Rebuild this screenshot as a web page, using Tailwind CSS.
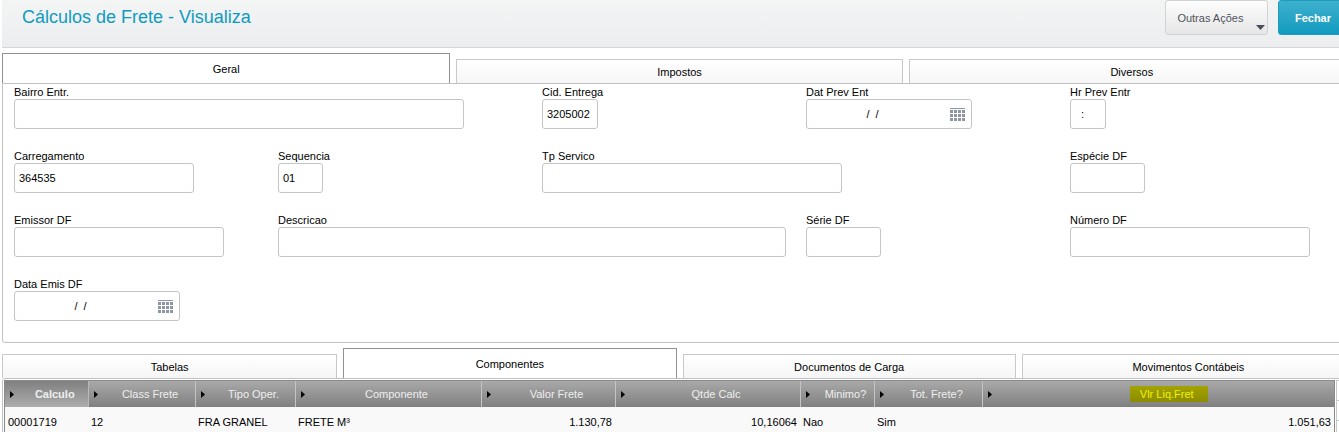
<!DOCTYPE html>
<html lang="pt-BR">
<head>
    <meta charset="UTF-8">
    <meta name="viewport" content="width=device-width, initial-scale=1.0">
    <title>Cálculos de Frete - Visualiza</title>
    <script src="https://cdn.jsdelivr.net/npm/@tailwindcss/browser@4"></script>
</head>
<body class="bg-white text-black text-[11px] leading-[15px] font-['Liberation_Sans',Arial,sans-serif] overflow-hidden">
<div class="pl-0.5 -mr-4">
    <!-- Cabeçalho -->
    <header class="flex justify-between items-start h-12 pl-5 pr-[7px] bg-linear-to-b from-[#f3f5f5] to-[#ecedef] border-b border-[#d5d6d8]">
        <h1 class="pt-1 text-[18px] leading-[26px] text-[#0f9bbf]">Cálculos de Frete - Visualiza</h1>
        <div class="flex gap-2.5">
            <button class="relative w-[103px] h-[35px] pt-0.5 pr-3 rounded-[3px] border border-[#d2d3d5] bg-linear-to-b from-[#fdfdfd] to-[#e6e6e6] text-[#4f535e]">
                Outras Ações
                <svg class="absolute right-0.5 bottom-1" width="9" height="5" viewBox="0 0 9 5" fill="#4a4e5a"><path d="M0 0h9L4.500 5z"/></svg>
            </button>
            <button class="h-[35px] px-4 pt-0.5 rounded-[3px] border border-[#1c9dbd] bg-linear-to-b from-[#3cb0cd] to-[#0e9bc0] text-white font-bold">Fechar</button>
        </div>
    </header>

    <!-- Abas superiores -->
    <nav class="flex items-end gap-1.5 h-[35px] pt-[5px]">
        <button class="grow basis-1 h-[30px] pt-0.5 border border-b-0 border-[#8f9193] bg-white">Geral</button>
        <button class="flex-1 h-6 pt-0.5 border border-b-0 border-[#c8c9ca] bg-linear-to-b from-white to-[#f6f6f6]">Impostos</button>
        <button class="flex-1 h-6 pt-0.5 border border-b-0 border-[#c8c9ca] bg-linear-to-b from-white to-[#f6f6f6]">Diversos</button>
    </nav>

    <!-- Formulário -->
    <form class="grid grid-cols-[repeat(5,264px)] gap-y-[19px] pl-[11px] pb-[21px] border border-[#c0c1c2] rounded-b-[3px]">
        <div class="col-span-2 flex flex-col items-start">
            <label for="bairro" class="pt-0.5 leading-[13px]">Bairro Entr.</label>
            <input id="bairro" type="text" class="w-[450px] h-[30px] px-1 border border-[#c4c5c6] rounded-[3px]">
        </div>
        <div class="flex flex-col items-start">
            <label for="cidade" class="pt-0.5 leading-[13px]">Cid. Entrega</label>
            <input id="cidade" type="text" value="3205002" class="w-14 h-[30px] px-1 border border-[#c4c5c6] rounded-[3px]">
        </div>
        <div class="flex flex-col items-start">
            <label for="dataPrev" class="pt-0.5 leading-[13px]">Dat Prev Ent</label>
            <div class="flex items-center w-[166px] h-[30px] pr-1.5 border border-[#c4c5c6] rounded-[3px]">
                <input id="dataPrev" type="text" value="/  /" class="w-full min-w-0 text-center pr-3">
                <button type="button" aria-label="Calendário" class="shrink-0">
                    <svg width="15" height="13" viewBox="0 0 15 13" fill="#8e95a3"><path d="M0 0h15v1H0zM0 2h3v3H0zM4 2h3v3H4zM8 2h3v3H8zM12 2h3v3h-3zM0 6h3v3H0zM4 6h3v3H4zM8 6h3v3H8zM12 6h3v3h-3zM0 10h3v3H0zM4 10h3v3H4zM8 10h3v3H8zM12 10h3v3h-3z"/></svg>
                </button>
            </div>
        </div>
        <div class="flex flex-col items-start">
            <label for="horaPrev" class="pt-0.5 leading-[13px]">Hr Prev Entr</label>
            <input id="horaPrev" type="text" value=":" class="w-9 h-[30px] pl-2.5 border border-[#c4c5c6] rounded-[3px]">
        </div>

        <div class="flex flex-col items-start">
            <label for="carregamento" class="pt-0.5 leading-[13px]">Carregamento</label>
            <input id="carregamento" type="text" value="364535" class="w-[180px] h-[30px] px-1 border border-[#c4c5c6] rounded-[3px]">
        </div>
        <div class="flex flex-col items-start">
            <label for="sequencia" class="pt-0.5 leading-[13px]">Sequencia</label>
            <input id="sequencia" type="text" value="01" class="w-[45px] h-[30px] px-1 border border-[#c4c5c6] rounded-[3px]">
        </div>
        <div class="col-span-2 flex flex-col items-start">
            <label for="servico" class="pt-0.5 leading-[13px]">Tp Servico</label>
            <input id="servico" type="text" class="w-[300px] h-[30px] px-1 border border-[#c4c5c6] rounded-[3px]">
        </div>
        <div class="flex flex-col items-start">
            <label for="especie" class="pt-0.5 leading-[13px]">Espécie DF</label>
            <input id="especie" type="text" class="w-[75px] h-[30px] px-1 border border-[#c4c5c6] rounded-[3px]">
        </div>

        <div class="flex flex-col items-start">
            <label for="emissor" class="pt-0.5 leading-[13px]">Emissor DF</label>
            <input id="emissor" type="text" class="w-[210px] h-[30px] px-1 border border-[#c4c5c6] rounded-[3px]">
        </div>
        <div class="col-span-2 flex flex-col items-start">
            <label for="descricao" class="pt-0.5 leading-[13px]">Descricao</label>
            <input id="descricao" type="text" class="w-[508px] h-[30px] px-1 border border-[#c4c5c6] rounded-[3px]">
        </div>
        <div class="flex flex-col items-start">
            <label for="serie" class="pt-0.5 leading-[13px]">Série DF</label>
            <input id="serie" type="text" class="w-[75px] h-[30px] px-1 border border-[#c4c5c6] rounded-[3px]">
        </div>
        <div class="flex flex-col items-start">
            <label for="numero" class="pt-0.5 leading-[13px]">Número DF</label>
            <input id="numero" type="text" class="w-[240px] h-[30px] px-1 border border-[#c4c5c6] rounded-[3px]">
        </div>

        <div class="flex flex-col items-start">
            <label for="dataEmis" class="pt-0.5 leading-[13px]">Data Emis DF</label>
            <div class="flex items-center w-[166px] h-[30px] pr-1.5 border border-[#c4c5c6] rounded-[3px]">
                <input id="dataEmis" type="text" value="/  /" class="w-full min-w-0 text-center pr-3">
                <button type="button" aria-label="Calendário" class="shrink-0">
                    <svg width="15" height="13" viewBox="0 0 15 13" fill="#8e95a3"><path d="M0 0h15v1H0zM0 2h3v3H0zM4 2h3v3H4zM8 2h3v3H8zM12 2h3v3h-3zM0 6h3v3H0zM4 6h3v3H4zM8 6h3v3H8zM12 6h3v3h-3zM0 10h3v3H0zM4 10h3v3H4zM8 10h3v3H8zM12 10h3v3h-3z"/></svg>
                </button>
            </div>
        </div>
    </form>

    <!-- Abas inferiores -->
    <nav class="flex items-end gap-1.5 h-[35px] pt-[5px]">
        <button class="grow basis-1 h-6 pt-0.5 border border-b-0 border-[#c8c9ca] bg-linear-to-b from-white to-[#f6f6f6]">Tabelas</button>
        <button class="flex-1 h-[30px] pt-0.5 border border-b-0 border-[#8f9193] bg-white">Componentes</button>
        <button class="flex-1 h-6 pt-0.5 border border-b-0 border-[#c8c9ca] bg-linear-to-b from-white to-[#f6f6f6]">Documentos de Carga</button>
        <button class="flex-1 h-6 pt-0.5 border border-b-0 border-[#c8c9ca] bg-linear-to-b from-white to-[#f6f6f6]">Movimentos Contábeis</button>
    </nav>

    <!-- Grade de componentes -->
    <section class="flex gap-px pt-px pl-px border border-[#c0c1c2] rounded-t-[3px]">
        <div class="flex-1 border border-[#8a8a8a]">
            <table class="w-full table-fixed border-collapse">
                <thead>
                    <tr class="h-[26px] text-[#eeeeee] bg-linear-to-b from-[#a9a9a9] to-[#808080]">
                        <th class="w-[83px] p-0 border-r border-[#b9b9b9] bg-linear-to-b from-[#808080] to-[#adadad] font-bold">
                            <div class="flex items-center pl-[5px]"><svg width="4" height="7" viewBox="0 0 4 7" fill="#000"><path d="M0 0l4 3.500L0 7z"/></svg><span class="flex-1 pl-2 text-center">Calculo</span></div>
                        </th>
                        <th class="w-[107px] p-0 border-r border-[#c4c4c4] font-normal">
                            <div class="flex items-center pl-[5px]"><svg width="4" height="7" viewBox="0 0 4 7" fill="#000"><path d="M0 0l4 3.500L0 7z"/></svg><span class="flex-1 pl-2 text-center">Class Frete</span></div>
                        </th>
                        <th class="w-[100px] p-0 border-r border-[#c4c4c4] font-normal">
                            <div class="flex items-center pl-[5px]"><svg width="4" height="7" viewBox="0 0 4 7" fill="#000"><path d="M0 0l4 3.500L0 7z"/></svg><span class="flex-1 pl-2 text-center">Tipo Oper.</span></div>
                        </th>
                        <th class="w-[186px] p-0 border-r border-[#c4c4c4] font-normal">
                            <div class="flex items-center pl-[5px]"><svg width="4" height="7" viewBox="0 0 4 7" fill="#000"><path d="M0 0l4 3.500L0 7z"/></svg><span class="flex-1 pl-2 text-center">Componente</span></div>
                        </th>
                        <th class="w-[134px] p-0 border-r border-[#c4c4c4] font-normal">
                            <div class="flex items-center pl-[5px]"><svg width="4" height="7" viewBox="0 0 4 7" fill="#000"><path d="M0 0l4 3.500L0 7z"/></svg><span class="flex-1 pl-2 text-center">Valor Frete</span></div>
                        </th>
                        <th class="w-[185px] p-0 border-r border-[#c4c4c4] font-normal">
                            <div class="flex items-center pl-[5px]"><svg width="4" height="7" viewBox="0 0 4 7" fill="#000"><path d="M0 0l4 3.500L0 7z"/></svg><span class="flex-1 pl-2 text-center">Qtde Calc</span></div>
                        </th>
                        <th class="w-[74px] p-0 border-r border-[#c4c4c4] font-normal">
                            <div class="flex items-center pl-[5px]"><svg width="4" height="7" viewBox="0 0 4 7" fill="#000"><path d="M0 0l4 3.500L0 7z"/></svg><span class="flex-1 pl-2 text-center">Minimo?</span></div>
                        </th>
                        <th class="w-[108px] p-0 border-r border-[#c4c4c4] font-normal">
                            <div class="flex items-center pl-[5px]"><svg width="4" height="7" viewBox="0 0 4 7" fill="#000"><path d="M0 0l4 3.500L0 7z"/></svg><span class="flex-1 pl-2 text-center">Tot. Frete?</span></div>
                        </th>
                        <th class="p-0 font-normal">
                            <div class="flex items-center pl-[5px]"><svg width="4" height="7" viewBox="0 0 4 7" fill="#000"><path d="M0 0l4 3.500L0 7z"/></svg><span class="flex-1 flex justify-center pl-3"><mark class="h-4 leading-4 pl-2.5 pr-3.5 bg-linear-to-b from-[#a3a300] to-[#8b8b00] text-[#f0f000]">Vlr Liq.Fret</mark></span></div>
                        </th>
                    </tr>
                </thead>
                <tbody>
                    <tr class="h-[30px] bg-[#f9f9f9]">
                        <td class="px-[3px]">00001719</td>
                        <td class="px-[3px]">12</td>
                        <td class="px-[3px]">FRA GRANEL</td>
                        <td class="px-[3px]">FRETE M³</td>
                        <td class="px-[3px] text-right">1.130,78</td>
                        <td class="px-[3px] text-right">10,16064</td>
                        <td class="px-[3px]">Nao</td>
                        <td class="px-[3px]">Sim</td>
                        <td class="px-[3px] text-right">1.051,63</td>
                    </tr>
                </tbody>
            </table>
        </div>
        <div class="flex flex-col w-[18px] border-t border-l border-[#c8c9ca]">
            <div class="h-5 border-b border-[#c8c9ca]"></div>
            <div class="h-5 border-b border-[#c8c9ca]"></div>
        </div>
    </section>
</div>
</body>
</html>
